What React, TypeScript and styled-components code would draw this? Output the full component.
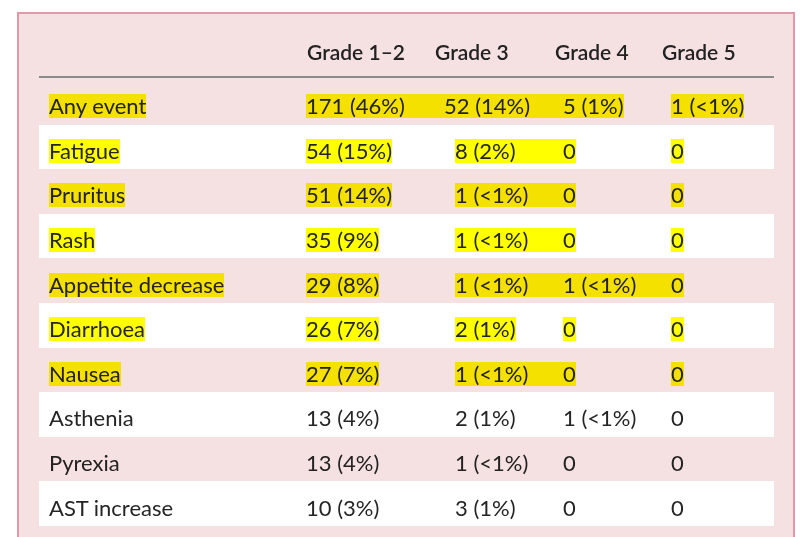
import React from "react";
import styled, { createGlobalStyle } from "styled-components";

const GlobalStyle = createGlobalStyle`
  html, body {
    margin: 0;
    padding: 0;
    background: #ffffff;
  }
  body {
    font-family: Lato, "Noto Sans", sans-serif;
    color: #2b2b2b;
  }
`;

const Page = styled.div`
  padding: 12px 0 0 17px;
  width: 810px;
  height: 537px;
  box-sizing: border-box;
  overflow: hidden;
`;

const Panel = styled.div`
  width: 778px;
  height: 560px;
  box-sizing: border-box;
  background: #f5e1e1;
  border: 2px solid #e597a8;
  padding: 0 19px 0 20px;
`;

const HeadRow = styled.div`
  display: grid;
  grid-template-columns: 268px 128px 120px 107px 1fr;
  padding: 25px 0 11px;
  border-bottom: 2px solid #8c8c8c;
  font-family: Lato, sans-serif;
  font-weight: 600;
  font-size: 21px;
  line-height: 26px;
  color: #222222;
`;

const HeadCell = styled.div`
  white-space: nowrap;
`;

const Body = styled.div`
  padding-top: 2px;
`;

const Row = styled.div<{ $white?: boolean }>`
  display: grid;
  grid-template-columns: 267px 138px 119px 108px 1fr;
  align-items: center;
  height: 44.6px;
  box-sizing: border-box;
  padding-top: 8px;
  background: ${(p) => (p.$white ? "#ffffff" : "transparent")};
  font-family: Lato, sans-serif;
  font-size: 22px;
  line-height: 24px;
  color: #252525;
`;

const Cell = styled.div<{ $indent?: number }>`
  display: flex;
  padding-left: ${(p) => p.$indent ?? 0}px;
  white-space: nowrap;
`;

const Mark = styled.span<{ $on?: boolean; $bridge?: boolean }>`
  display: inline-block;
  flex: ${(p) => (p.$bridge ? 1 : "none")};
  background: ${(p) => (p.$on ? "#ffff00" : "transparent")};
  mix-blend-mode: multiply;
`;

type Hl = "" | "m" | "b";

interface Entry {
  label: string;
  labelHl: boolean;
  values: [string, string, string, string];
  hl: [Hl, Hl, Hl, Hl];
  white: boolean;
}

const rows: Entry[] = [
  { label: "Any event", labelHl: true, values: ["171 (46%)", "52 (14%)", "5 (1%)", "1 (<1%)"], hl: ["b", "b", "m", "m"], white: false },
  { label: "Fatigue", labelHl: true, values: ["54 (15%)", "8 (2%)", "0", "0"], hl: ["m", "b", "m", "m"], white: true },
  { label: "Pruritus", labelHl: true, values: ["51 (14%)", "1 (<1%)", "0", "0"], hl: ["m", "b", "m", "m"], white: false },
  { label: "Rash", labelHl: true, values: ["35 (9%)", "1 (<1%)", "0", "0"], hl: ["m", "b", "m", "m"], white: true },
  { label: "Appetite decrease", labelHl: true, values: ["29 (8%)", "1 (<1%)", "1 (<1%)", "0"], hl: ["m", "b", "b", "m"], white: false },
  { label: "Diarrhoea", labelHl: true, values: ["26 (7%)", "2 (1%)", "0", "0"], hl: ["m", "m", "m", "m"], white: true },
  { label: "Nausea", labelHl: true, values: ["27 (7%)", "1 (<1%)", "0", "0"], hl: ["m", "b", "m", "m"], white: false },
  { label: "Asthenia", labelHl: false, values: ["13 (4%)", "2 (1%)", "1 (<1%)", "0"], hl: ["", "", "", ""], white: true },
  { label: "Pyrexia", labelHl: false, values: ["13 (4%)", "1 (<1%)", "0", "0"], hl: ["", "", "", ""], white: false },
  { label: "AST increase", labelHl: false, values: ["10 (3%)", "3 (1%)", "0", "0"], hl: ["", "", "", ""], white: true },
];

// single-digit counts in the Grade 3 column line up on the bracket
const indentFor = (col: number, v: string) => (col === 1 && /^\d\s/.test(v) ? 11 : 0);

const App: React.FC = () => (
  <>
    <GlobalStyle />
    <Page>
      <Panel>
        <HeadRow>
          <HeadCell />
          <HeadCell>Grade 1–2</HeadCell>
          <HeadCell>Grade 3</HeadCell>
          <HeadCell>Grade 4</HeadCell>
          <HeadCell>Grade 5</HeadCell>
        </HeadRow>
        <Body>
          {rows.map((r) => (
            <Row key={r.label} $white={r.white}>
              <Cell $indent={10}>
                <Mark $on={r.labelHl}>{r.label}</Mark>
              </Cell>
              {r.values.map((v, i) => (
                <Cell key={i} $indent={indentFor(i, v)}>
                  <Mark $on={r.hl[i] !== ""} $bridge={r.hl[i] === "b"}>
                    {v}
                  </Mark>
                </Cell>
              ))}
            </Row>
          ))}
        </Body>
      </Panel>
    </Page>
  </>
);

export default App;
